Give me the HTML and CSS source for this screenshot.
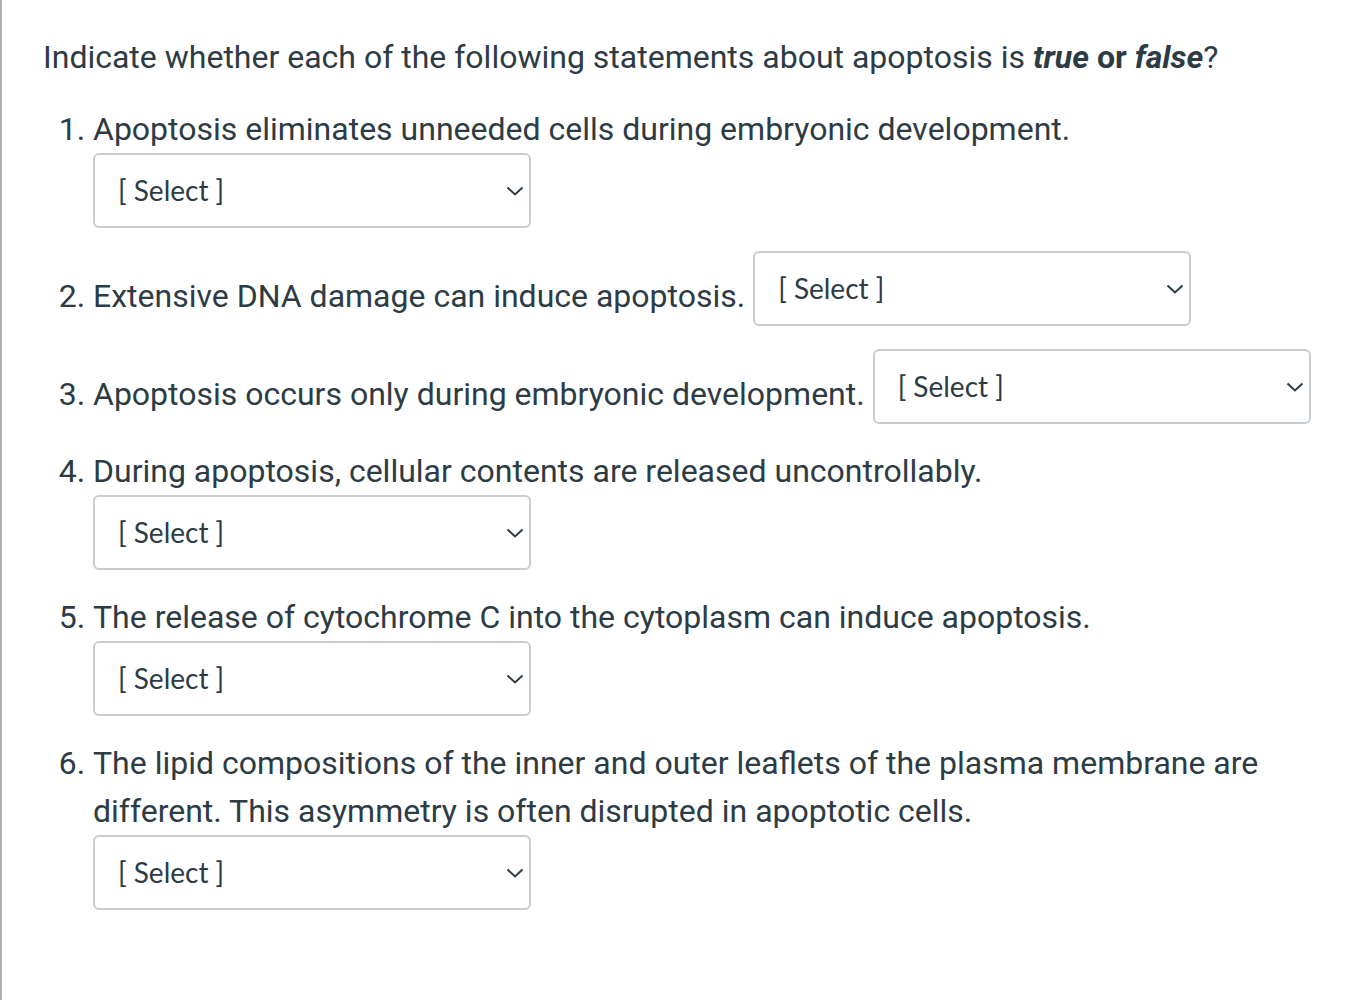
FILE: index.html
```html
<!DOCTYPE html>
<html lang="en">
<head>
<meta charset="utf-8">
<title>Apoptosis quiz</title>
<link rel="stylesheet" href="styles.css">
</head>
<body>
<div class="page">
  <p class="prompt">Indicate whether each of the following statements about apoptosis is <strong><em>true</em> or <em>false</em></strong>?</p>
  <ol class="items">
    <li>Apoptosis eliminates unneeded cells during embryonic development. <span class="sel"><select aria-label="Answer 1"><option>[ Select ]</option><option>True</option><option>False</option></select><svg class="chev" viewBox="0 0 18 10" width="18" height="10"><path d="M1.5 1.5 L9 8.5 L16.5 1.5" fill="none" stroke="#2d3b45" stroke-width="2"/></svg></span></li>
    <li>Extensive DNA damage can induce apoptosis. <span class="sel"><select aria-label="Answer 2"><option>[ Select ]</option><option>True</option><option>False</option></select><svg class="chev" viewBox="0 0 18 10" width="18" height="10"><path d="M1.5 1.5 L9 8.5 L16.5 1.5" fill="none" stroke="#2d3b45" stroke-width="2"/></svg></span></li>
    <li>Apoptosis occurs only during embryonic development. <span class="sel"><select aria-label="Answer 3"><option>[ Select ]</option><option>True</option><option>False</option></select><svg class="chev" viewBox="0 0 18 10" width="18" height="10"><path d="M1.5 1.5 L9 8.5 L16.5 1.5" fill="none" stroke="#2d3b45" stroke-width="2"/></svg></span></li>
    <li>During apoptosis, cellular contents are released uncontrollably. <span class="sel"><select aria-label="Answer 4"><option>[ Select ]</option><option>True</option><option>False</option></select><svg class="chev" viewBox="0 0 18 10" width="18" height="10"><path d="M1.5 1.5 L9 8.5 L16.5 1.5" fill="none" stroke="#2d3b45" stroke-width="2"/></svg></span></li>
    <li>The release of cytochrome C into the cytoplasm can induce apoptosis. <span class="sel"><select aria-label="Answer 5"><option>[ Select ]</option><option>True</option><option>False</option></select><svg class="chev" viewBox="0 0 18 10" width="18" height="10"><path d="M1.5 1.5 L9 8.5 L16.5 1.5" fill="none" stroke="#2d3b45" stroke-width="2"/></svg></span></li>
    <li>The lipid compositions of the inner and outer leaflets of the plasma membrane are different. This asymmetry is often disrupted in apoptotic cells. <span class="sel"><select aria-label="Answer 6"><option>[ Select ]</option><option>True</option><option>False</option></select><svg class="chev" viewBox="0 0 18 10" width="18" height="10"><path d="M1.5 1.5 L9 8.5 L16.5 1.5" fill="none" stroke="#2d3b45" stroke-width="2"/></svg></span></li>
  </ol>
</div>
</body>
</html>
```

FILE: styles.css
```css
html, body {
  margin: 0;
  padding: 0;
  background: #ffffff;
}

.page {
  min-height: 1000px;
  box-sizing: border-box;
  border-left: 2px solid #aeaeae;
  padding: 33px 20px 0 41px;
  font-family: Roboto, "Liberation Sans", Arial, sans-serif;
  font-size: 32px;
  line-height: 48px;
  color: #2d3b45;
}

.prompt {
  margin: 0 0 24px 0;
}

.prompt strong {
  font-weight: 700;
}

.items {
  margin: 0;
  padding: 0 0 0 50px;
}

.items li {
  margin: 0 0 29px 0;
}

.sel {
  position: relative;
  display: inline-block;
  overflow: hidden;
  vertical-align: baseline;
  margin: 0 0 -19px 0;
  width: 438px;
  height: 75px;
}

.sel select {
  appearance: none;
  -webkit-appearance: none;
  box-sizing: border-box;
  width: 100%;
  height: 100%;
  margin: 0;
  padding: 0 40px 1px 23px;
  border: 2px solid #c7cdd1;
  border-radius: 6px;
  background: #ffffff;
  font-family: Lato, "Noto Sans", sans-serif;
  font-size: 28px;
  color: #2d3b45;
}

.chev {
  position: absolute;
  right: 7px;
  top: 33px;
  pointer-events: none;
}
```
